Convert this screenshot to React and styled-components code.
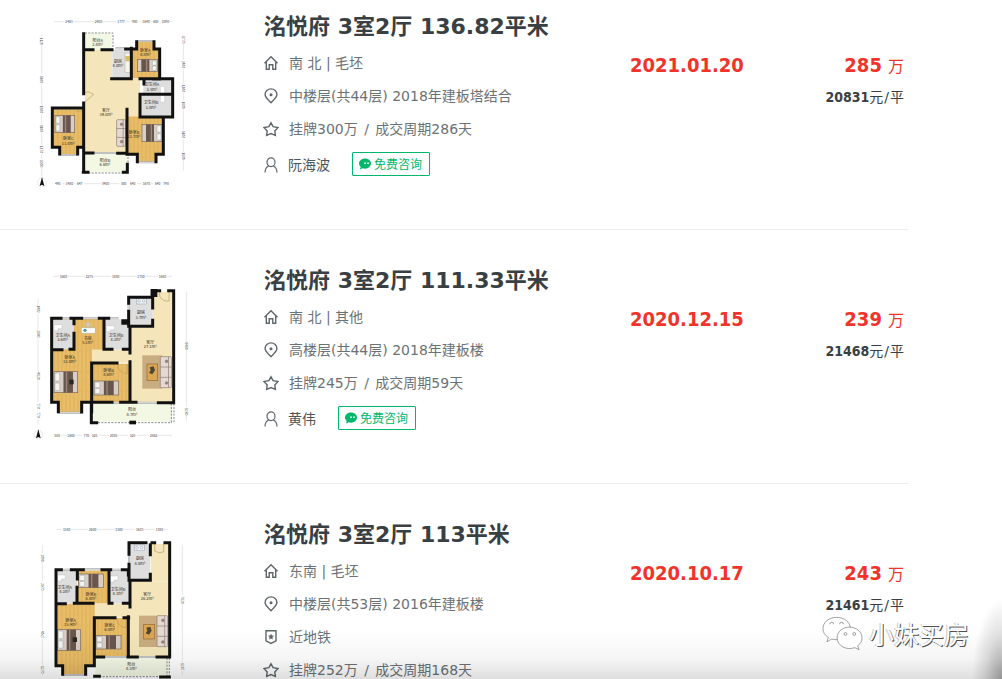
import React from "react";
import styled, { createGlobalStyle } from "styled-components";

const GlobalStyle = createGlobalStyle`
  * { box-sizing: border-box; }
  body {
    margin: 0;
    background: #fff;
    color: #394043;
    font-family: "DejaVu Sans", "Noto Sans CJK SC", sans-serif;
  }
`;

const Page = styled.main`
  position: relative;
  height: 100vh;
  overflow: hidden;
`;

const List = styled.ul`
  list-style: none;
  margin: 0 94px 0 0;
  padding: 0;
`;

const Item = styled.li`
  display: flex;
  align-items: flex-start;
  padding: 35px 4px 45px 30px;
  border-bottom: 1px solid #ebebeb;
  &:first-child { padding-top: 11px; }
`;

const Plan = styled.svg`
  flex: none;
  width: 170px;
  height: 180px;
  margin-right: 64px;
  margin-bottom: -7px;
  font-family: "Noto Sans CJK SC", sans-serif;
`;

const Info = styled.div`
  flex: 1;
  min-width: 0;
`;

const Title = styled.h2`
  margin: 0 0 3px;
  font-size: 22px;
  line-height: 32px;
  font-weight: 700;
  white-space: nowrap;
`;

const Row = styled.div`
  display: flex;
  align-items: center;
  gap: ${(p) => (p.$contact ? "9px" : "10px")};
  height: ${(p) => (p.$contact ? "39px" : "33px")};
  font-size: 14px;
  line-height: 20px;
  color: ${(p) => (p.$contact ? "#4d5558" : "#6b7275")};
  white-space: nowrap;
`;

const Slash = styled.span`
  margin: 0 ${(p) => (p.$wide ? "2px" : "1px")};
`;

const Icon = styled.svg`
  flex: none;
  width: 16px;
  height: 16px;
  margin-left: -1px;
  fill: none;
  stroke: #5d676b;
  stroke-width: 1.4;
`;

const Consult = styled.button`
  display: flex;
  align-items: center;
  gap: 3px;
  height: 24px;
  margin: 0 0 2px 13px;
  padding: 0 7px 0 6px;
  border: 1px solid #00b76b;
  border-radius: 1px;
  background: #fff;
  color: #00b76b;
  font: 12px/16px "Noto Sans CJK SC", sans-serif;
`;

const Chat = styled.svg`
  width: 12px;
  height: 12px;
`;

const DealDate = styled.time`
  width: 114px;
  padding-top: 40px;
  color: #f0342b;
  font: 700 20px/28px "DejaVu Sans Condensed", "Noto Sans", sans-serif;
  white-space: nowrap;
`;

const Deal = styled.div`
  width: 160px;
  padding-top: 40px;
  text-align: right;
  white-space: nowrap;
  strong { font-family: "DejaVu Sans Condensed", "Noto Sans", sans-serif; }
`;

const Total = styled.div`
  color: #f0342b;
  font-size: 16px;
  line-height: 28px;
  strong {
    margin-right: 1px;
    font-size: 20px;
  }
`;

const Unit = styled.div`
  margin-top: 6px;
  font-size: 14px;
  line-height: 20px;
`;

const Shade = styled.div`
  position: absolute;
  inset: auto 0 0 0;
  height: 50px;
  pointer-events: none;
  background: linear-gradient(to bottom, rgba(0, 0, 0, 0), rgba(0, 0, 0, 0.04) 60%, rgba(0, 0, 0, 0.13));
`;

const Corner = styled.div`
  position: absolute;
  right: 0;
  bottom: 0;
  width: 30px;
  height: 80px;
  pointer-events: none;
  background: radial-gradient(100% 100% at 100% 100%, rgba(0, 0, 0, 0.34), rgba(0, 0, 0, 0.12) 55%, rgba(0, 0, 0, 0));
`;

const Watermark = styled.div`
  position: absolute;
  right: 33px;
  bottom: 28px;
  display: flex;
  align-items: center;
  gap: 6px;
  color: #fff;
  font: 25px/36px "Noto Sans CJK SC", sans-serif;
  text-shadow: 1px 1px 0 #505050, -1px 0 0 #c4c4c4;
`;

const WeChat = styled.svg`
  width: 41px;
  height: 36px;
  fill: #fff;
  stroke: #777;
  stroke-width: 0.7;
`;

const icons = {
  home: (
    <>
      <path d="M1.5 8.2 8 1.7l6.500 6.500M3.300 6.800v7.500h2.900V9.700h3.600v4.600h2.900V6.800" />
    </>
  ),
  pin: (
    <>
      <path d="M8 14.700C5.200 11.900 2.100 9.600 2.100 6.600a5.900 5.700 0 0 1 11.800 0c0 3-3.100 5.300-5.900 8.100z" />
      <circle cx="8" cy="6.700" r="1.500" fill="#5d676b" stroke="none" />
    </>
  ),
  star: <path d="m8 1.800 2.100 3.900 4.900.9-3.200 3.300.6 4.400L8 12.600l-4.400 1.700.6-4.400L1 6.600l4.900-.9z" />,
  user: (
    <g strokeWidth="1.200">
      <ellipse cx="8" cy="5.200" rx="4" ry="4.400" />
      <path d="M5.700 9C3.400 10 2 12.100 2 15.600M10.300 9c2.300 1 3.700 3.100 3.700 6.600" />
    </g>
  ),
  metro: (
    <>
      <path d="M3 1.700h10v10.100L8 14.400l-5-2.600z" />
      <path fill="#5d676b" stroke="none" d="m8 4.600.9 1.900 2.100.3-1.500 1.500.3 2.100L8 9.400l-1.800 1 .3-2.100L5 6.800l2.100-.3z" />
    </>
  ),
};

const fills = {
  wood: "#e4b65f",
  tile: "#f4e6ba",
  grey: "#dedede",
  balcony: "#f3f8e5",
};

function Bed({ x, y, w, h, flip }) {
  return (
    <g transform={flip ? `translate(${2 * x + w} 0) scale(-1 1)` : undefined}>
      <rect x={x} y={y} width={w} height={h} fill="#d9cec6" stroke="#7c6655" strokeWidth="2" />
      <rect x={x + w * 0.4} y={y} width={w * 0.4} height={h} fill="#68564c" />
      <rect x={x + w * 0.5} y={y} width="4" height={h} fill="#9a887c" />
      <rect x={x + 3} y={y + 4} width={w * 0.2} height={h * 0.38} rx="3" fill="#f7f3ee" stroke="#678d91" />
      <rect x={x + 3} y={y + h * 0.54} width={w * 0.2} height={h * 0.36} rx="3" fill="#f7f3ee" stroke="#678d91" />
    </g>
  );
}

function Sofa({ x, y, w = 30, h }) {
  return (
    <g stroke="#8b7a70" strokeWidth="2" fill="#e4dad3">
      <rect x={x} y={y} width={w} height={h} rx="3" />
      <path d={`M${x} ${y + h / 3}h${w}M${x} ${y + (2 * h) / 3}h${w}M${x + w * 0.72} ${y}v${h}`} />
      <circle cx={x + w * 0.55} cy={y + 14} r="4" fill="#988378" />
      <circle cx={x + w * 0.55} cy={y + h - 14} r="4" fill="#988378" />
    </g>
  );
}

function Rug({ x, y, w, h }) {
  return (
    <>
      <rect x={x} y={y} width={w} height={h} fill="#c9ad80" />
      <rect x={x + 14} y={y + 26} width="32" height={h - 50} fill="#dba552" stroke="#8d6937" strokeWidth="2" />
      <path d={`m${x + 22} ${y + 36} 12-3 4 12-8 12-10-4 5-8z`} fill="#4d4638" />
    </>
  );
}

function Basin({ x, y }) {
  return <path d={`M${x} ${y}h24v12h-12v6H${x}z`} fill="#fff" stroke="#aaa" />;
}

function Hob({ x, y }) {
  return (
    <g fill="#eef2f6" stroke="#6d7b8a">
      <rect x={x} y={y} width="30" height="17" />
      <circle cx={x + 8} cy={y + 8} r="4" />
      <circle cx={x + 22} cy={y + 8} r="4" />
    </g>
  );
}

const plans = [
  {
    rooms: [
      ["balcony", 165, 68, 80, 48], ["tile", 165, 116, 82, 308], ["tile", 245, 203, 85, 113],
      ["tile", 245, 300, 45, 124], ["grey", 247, 116, 56, 86], ["wood", 306, 114, 84, 88], ["wood", 320, 90, 52, 26],
      ["grey", 340, 203, 85, 46], ["grey", 330, 249, 95, 66], ["wood", 292, 316, 108, 114], ["wood", 322, 428, 56, 26],
      ["wood", 72, 295, 90, 114], ["wood", 89, 407, 54, 25], ["balcony", 165, 426, 126, 58],
    ],
    walls: "M161 68V248M161 276V484M161 116h28M216 116h30M287 114h33V92M372 92v22h17v90h-18M304 112v91h-59M330 203h12v16M338 203h90v47h-98v65M428 250v68h-98M400 318v112h-22v22M322 452v-22h-31V295M291 427h-28M161 426h28M67 409v-118h94M67 409h22v20M161 409h-18v20M160 484h14M280 484h12v-24",
    windows: "M320 90h52M322 454h56M89 432h54M428 204v44M190 426h74M256 112h28",
    dashed: "M165 66h84v46M165 486h115M294 428v30",
    doors: "M161 276l30-26a31 31 0 0 0-30-6M138 300h24v20",
    beds: [[322, 145, 60, 37, true], [75, 313, 59, 52], [336, 340, 60, 52, true]],
    sofa: [260, 326, 27, 80],
    extras: <><rect x="285" y="126" width="16" height="58" fill="#f6f4eb" stroke="#93918a" /><rect x="286" y="135" width="13" height="16" fill="#d6c05f" /><rect x="391" y="226" width="13" height="48" rx="4" fill="#fff" stroke="#aaa" /></>,
    labels: [["阳台A", "2.4m²", 203, 92], ["厨房", "4.0m²", 264, 156], ["卧室A", "8.8m²", 346, 122], ["卫生间A", "3.5m²", 366, 226], ["卫生间B", "3.8m²", 363, 280], ["客厅", "39.0m²", 228, 302], ["卧室B", "12.7m²", 312, 369], ["卧室C", "11.8m²", 115, 388], ["阳台B", "6.6m²", 225, 453]],
    top: [32, [["2463", 117], ["2400", 205], ["1777", 273], ["980", 314], ["1640", 348], ["680", 377], ["1090", 406]], 72, 424],
    bottom: [518, [["490", 83], ["1480", 118], ["647", 149], ["3400", 226], ["580", 281], ["640", 308], ["1670", 349], ["640", 383], ["790", 408]], 72, 424],
    left: [35, [["1120", 90], ["3300", 205], ["1500", 295], ["3100", 352], ["1370", 415], ["1300", 458]], 70, 498],
    right: [460, [["1770", 86], ["2400", 160], ["1300", 232], ["1600", 282], ["3100", 370], ["1600", 435]], 70, 478],
    compass: [36, 514],
  },
  {
    rooms: [
      ["tile", 368, 80, 58, 110], ["tile", 300, 187, 127, 226], ["tile", 186, 253, 130, 40], ["wood", 68, 160, 118, 250],
      ["wood", 136, 160, 84, 94], ["wood", 84, 408, 70, 34], ["grey", 68, 163, 64, 90], ["grey", 225, 163, 72, 90],
      ["grey", 300, 97, 68, 88], ["wood", 188, 296, 110, 116], ["balcony", 188, 415, 238, 55],
    ],
    walls: "M375 91V77h14M416 77h15v336h-46M375 77h-8v20H296v18M296 139v45h72v-18M368 97v32M300 184v80M300 290v122M65 412V160h28M123 160h32M208 160h28M132 160v16M132 205v48h-12M66 254h30M222 160v93h24M280 253h18M185 440V294h76M186 412h60M185 412h-30v29M65 412h20v28M272 412h46M184 415v58h16",
    windows: "M93 160h30M155 160h54M236 160h30M84 443h70M247 413h24M320 413h64M296 115v24",
    dashed: "M204 473h222M432 416v57M424 416v57",
    doors: "M389 77v17a28 28 0 0 0 28 14V77M263 297a28 28 0 0 0 29 29v-29",
    beds: [[72, 320, 71, 63], [192, 348, 74, 42]],
    rug: [337, 271, 60, 100], sofa: [391, 275, 34, 93],
    extras: <><Basin x={72} y={179} /><Basin x={229} y={182} /><Hob x={319} y={100} /><path d="M154 188h42v17h-42z" fill="#fff" stroke="#789" /><circle cx="175" cy="179" r="7" fill="#c9c9bd" /><circle cx="165" cy="196" r="5" fill="#4d9aa4" /><path d="M298 467h20v11h-20z" fill="#111" /></>,
    labels: [["厨房", "3.7m²", 333, 148], ["卫生间A", "3.6m²", 98, 215], ["书房", "5.1m²", 173, 224], ["卫生间B", "4.2m²", 258, 215], ["客厅", "27.1m²", 361, 237], ["卧室A", "13.8m²", 119, 282], ["卧室B", "8.6m²", 236, 321], ["阳台", "8.7m²", 306, 439]],
    top: [34, [["1600", 100], ["2275", 178], ["1880", 257], ["1750", 333], ["1680", 397]], 69, 426],
    bottom: [511, [["550", 81], ["1680", 123], ["770", 169], ["525", 194], ["2085", 251], ["525", 308], ["2862", 371]], 69, 426],
    left: [24, [["1402", 132], ["2300", 206], ["4620", 333], ["770", 423], ["770", 450]], 100, 480],
    right: [469, [["8480", 243], ["1280", 440]], 80, 467],
    compass: [25, 509],
  },
  {
    rooms: [
      ["tile", 362, 75, 56, 112], ["tile", 300, 187, 116, 226], ["tile", 190, 253, 122, 42], ["wood", 82, 254, 112, 184],
      ["wood", 96, 437, 72, 28], ["grey", 82, 155, 60, 98], ["wood", 144, 155, 91, 98], ["grey", 236, 155, 62, 98],
      ["grey", 300, 77, 60, 107], ["wood", 194, 297, 104, 117], ["balcony", 196, 417, 222, 54],
    ],
    walls: "M366 71h8M405 71h14v343h-38M348 71h-51v35M297 136v48h64v-18M361 77v30M300 184v80M295 293v121M78 439V152h16M124 152h36M216 152h26M277 152h18v16M142 152v28M141 205v48h-8M78 254h28M147 253h42M237 152v101h9M280 253h18M193 436V296h62M282 296h14M195 414h26M78 440h20v26M193 440h-26v26M194 472h14M294 414h28M392 474h26",
    windows: "M96 152h26M162 151h52M244 152h31M96 468h70M222 414h70M323 414h55M297 106v28",
    dashed: "M208 473h190M418 417v55M411 417v55",
    doors: "M374 73v23a28 28 0 0 0 27 3V73M260 298a28 28 0 0 0 28 28v-28",
    beds: [[82, 332, 70, 62], [146, 165, 74, 41], [198, 349, 75, 41]],
    rug: [327, 290, 60, 94], sofa: [381, 290, 32, 93],
    extras: <><Basin x={82} y={168} /><Basin x={240} y={171} /><Hob x={313} y={78} /></>,
    labels: [["厨房", "4.8m²", 330, 124], ["卫生间A", "4.3m²", 104, 209], ["卧室B", "6.8m²", 183, 231], ["卫生间B", "4.1m²", 264, 215], ["客厅", "26.2m²", 352, 230], ["卧室A", "15.9m²", 122, 308], ["卧室C", "6.8m²", 239, 324], ["阳台", "8.3m²", 304, 441]],
    top: [31, [["1580", 110], ["2600", 188], ["1580", 267], ["1603", 329], ["1380", 388]], 79, 415],
    bottom: null,
    left: [37, [["2090", 117], ["2370", 203], ["4527", 347], ["1270", 452]], 77, 468],
    right: [457, [["7620", 243], ["1287", 443]], 77, 468],
    compass: null,
  },
];

function Scale({ data, vertical }) {
  if (!data) return null;
  const [at, marks, from, to] = data;
  return (
    <g>
      <path
        d={vertical ? `M${at} ${from}V${to}` : `M${from} ${at}H${to}`}
        stroke="#b5b5b5"
        strokeWidth="1"
        fill="none"
      />
      {marks.map(([text, pos], i) => {
        const x = vertical ? at : pos;
        const y = vertical ? pos : at;
        return (
          <g key={i} transform={`translate(${x} ${y})${vertical ? " rotate(90)" : ""}`}>
            <rect x="-13" y="-6" width="26" height="12" fill="#fff" />
            <text y="4" textAnchor="middle" fontSize="10" fill="#444">{text}</text>
          </g>
        );
      })}
    </g>
  );
}

function FloorPlan({ index, label }) {
  const p = plans[index];
  const grain = `grain-${index}`;
  return (
    <Plan viewBox="0 0 510 540" role="img" aria-label={label}>
      <defs>
        <pattern id={grain} width="24" height="60" patternUnits="userSpaceOnUse">
          <rect width="24" height="60" fill={fills.wood} />
          <path d="M6 0v60M18 0v60" stroke="#e8bd69" strokeWidth="6" />
          <path d="M0 20h12M12 46h12" stroke="#dcac52" />
        </pattern>
      </defs>
      {p.rooms.map(([kind, x, y, w, h], i) => (
        <rect key={i} x={x} y={y} width={w} height={h} fill={kind === "wood" ? `url(#${grain})` : fills[kind]} />
      ))}
      <path d={p.windows} stroke="#a3a3a3" strokeWidth="6" fill="none" />
      <path d={p.windows} stroke="#fff" strokeWidth="2" fill="none" />
      <path d={p.dashed} stroke="#888" strokeWidth="3" strokeDasharray="6 4" fill="none" />
      <path d={p.doors} stroke="#b99d62" strokeWidth="2" fill="none" />
      {p.rug && <Rug x={p.rug[0]} y={p.rug[1]} w={p.rug[2]} h={p.rug[3]} />}
      <Sofa x={p.sofa[0]} y={p.sofa[1]} w={p.sofa[2]} h={p.sofa[3]} />
      {p.beds.map(([x, y, w, h, flip], i) => <Bed key={i} x={x} y={y} w={w} h={h} flip={flip} />)}
      {index > 0 && <rect x={index === 1 ? 118 : 128} y={index === 1 ? 344 : 355} width="13" height="14" fill="#262923" />}
      {p.extras}
      <path d={p.walls} stroke="#111" strokeWidth="9" strokeLinecap="square" fill="none" />
      {index === 1 && <path d="M362 72h20v24h-20zM274 163h24v16h-24z" fill="#111" />}
      {p.labels.map(([name, area, x, y]) => (
        <text key={name} x={x} y={y} textAnchor="middle" fontSize="12" fill="#2d2a22">
          {name}
          <tspan x={x} dy="13">{area}</tspan>
        </text>
      ))}
      <Scale data={p.top} />
      <Scale data={p.bottom} />
      <Scale data={p.left} vertical />
      <Scale data={p.right} vertical />
      {p.compass && (
        <g transform={`translate(${p.compass[0]} ${p.compass[1]})`}>
          <circle r="13" fill="#fff" stroke="#bbb" />
          <path d="M0-16 7 11 0 7l-7 4z" fill="#111" />
        </g>
      )}
    </Plan>
  );
}

const deals = [
  {
    title: "洺悦府 3室2厅 136.82平米",
    rows: [["home", "南 北 | 毛坯"], ["pin", "中楼层(共44层) 2018年建板塔结合"], ["star", "挂牌300万", "成交周期286天"]],
    agent: "阮海波", date: "2021.01.20", total: 285, unit: 20831,
  },
  {
    title: "洺悦府 3室2厅 111.33平米",
    rows: [["home", "南 北 | 其他"], ["pin", "高楼层(共44层) 2018年建板楼"], ["star", "挂牌245万", "成交周期59天"]],
    agent: "黄伟", date: "2020.12.15", total: 239, unit: 21468,
  },
  {
    title: "洺悦府 3室2厅 113平米",
    rows: [["home", "东南 | 毛坯"], ["pin", "中楼层(共53层) 2016年建板楼"], ["metro", "近地铁"], ["star", "挂牌252万", "成交周期168天"]],
    date: "2020.10.17", total: 243, unit: 21461,
  },
];

export default function App() {
  return (
    <Page>
      <GlobalStyle />
      <List>
        {deals.map((d, i) => (
          <Item key={d.title}>
            <FloorPlan index={i} label={d.title} />
            <Info>
              <Title>{d.title}</Title>
              {d.rows.map(([icon, text, cycle]) => (
                <Row key={icon}>
                  <Icon viewBox="0 0 16 16" aria-hidden="true">{icons[icon]}</Icon>
                  <span>
                    {text}
                    {cycle && <> <Slash $wide>/</Slash> {cycle}</>}
                  </span>
                </Row>
              ))}
              {d.agent && (
                <Row $contact>
                  <Icon viewBox="0 0 16 16" aria-hidden="true">{icons.user}</Icon>
                  <span>{d.agent}</span>
                  <Consult type="button">
                    <Chat viewBox="0 0 12 12" aria-hidden="true">
                      <path d="M6 .6c3.300 0 6 2.200 6 5s-2.700 5.100-6 5.100c-.8 0-1.500-.1-2.200-.4L1 11.400l.7-2.500C.6 8 0 6.900 0 5.600c0-2.800 2.700-5 6-5z" fill="#00b76b" />
                      <circle cx="6" cy="5.200" r=".9" fill="#fff" />
                      <circle cx="9" cy="5.200" r=".9" fill="#fff" />
                    </Chat>
                    免费咨询
                  </Consult>
                </Row>
              )}
            </Info>
            <DealDate>{d.date}</DealDate>
            <Deal>
              <Total><strong>{d.total}</strong> 万</Total>
              <Unit><strong>{d.unit}</strong>元<Slash>/</Slash>平</Unit>
            </Deal>
          </Item>
        ))}
      </List>
      <Shade />
      <Corner />
      <Watermark>
        <WeChat viewBox="0 0 42 36" aria-hidden="true">
          <path d="M15 2C7 2 1 7 1 13.500c0 4 2 7 5.500 9L5 27l5-2.800c2 .5 4 .7 6 .6C25 25 29 19 29 13 29 7 23 2 15 2z" />
          <path d="M28 12c7 0 13 4.500 13 11 0 3.500-2 6.500-4.500 8.200L38 35l-4.500-2c-8 3-18-1.500-18-10 0-6.500 5.500-11 12.500-11z" />
          <g fill="none">
            <path d="M8 9a2 2 0 0 1 4 0M18 9a2 2 0 0 1 4 0" />
            <circle cx="24" cy="19" r="1.500" />
            <circle cx="33" cy="19" r="1.500" />
          </g>
        </WeChat>
        <span>小妹买房</span>
      </Watermark>
    </Page>
  );
}
